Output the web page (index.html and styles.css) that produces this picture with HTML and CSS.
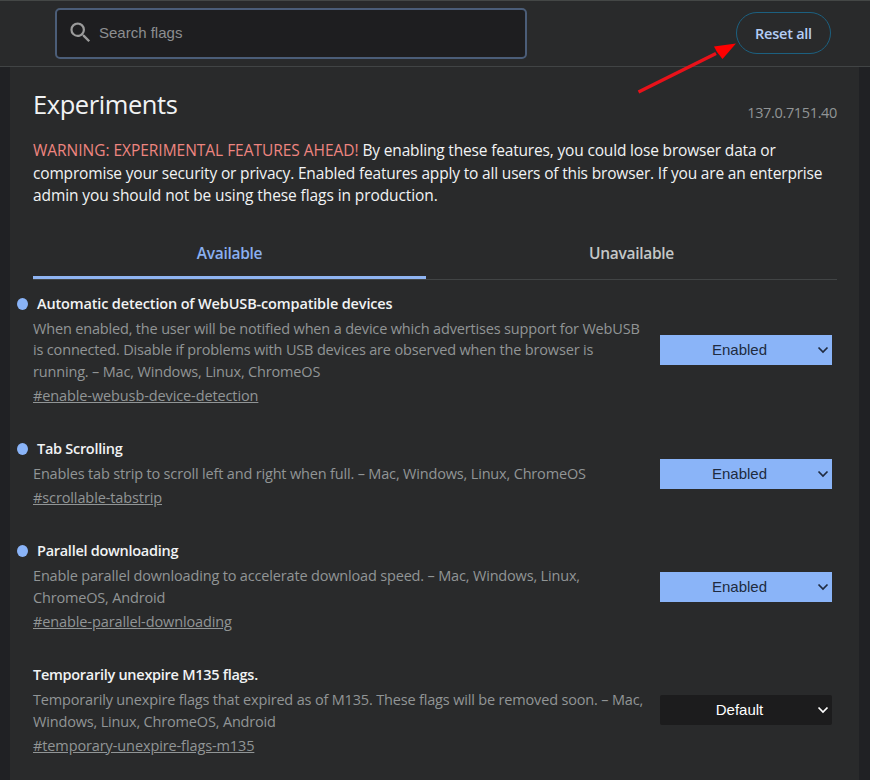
FILE: index.html
```html
<!DOCTYPE html>
<html lang="en">
<head>
<meta charset="utf-8">
<title>Experiments</title>
<link rel="stylesheet" href="styles.css">
</head>
<body>
<header class="topbar">
  <div class="search">
    <svg class="search-icon" viewBox="0 0 24 24"><path d="M15.5 14h-.79l-.28-.27A6.471 6.471 0 0 0 16 9.500 6.500 6.500 0 1 0 9.500 16c1.610 0 3.090-.59 4.230-1.570l.27.28v.79l5 4.990L20.490 19l-4.990-5zm-6 0C7.010 14 5 11.990 5 9.500S7.010 5 9.500 5 14 7.010 14 9.500 11.990 14 9.500 14z"/></svg>
    <span>Search flags</span>
  </div>
  <div class="reset">Reset all</div>
</header>
<svg class="arrow" viewBox="0 0 110 60"><path d="M8.500 52L86 13.500" stroke="#e8121a" stroke-width="3.500"/><path d="M106 3.500L84 6.500L87 12L92.500 19Z" fill="#f00"/></svg>
<main class="page">
  <div class="heading"><h1>Experiments</h1><span class="version">137.0.7151.40</span></div>
  <p class="blurb"><span class="warning">WARNING: EXPERIMENTAL FEATURES AHEAD!</span> By enabling these features, you could lose browser data or<br>compromise your security or privacy. Enabled features apply to all users of this browser. If you are an enterprise<br><span class="closing">admin you should not be using these flags in production.</span></p>
  <nav class="tabs"><div class="tab active">Available</div><div class="tab">Unavailable</div></nav>
  <section class="flag changed">
    <div class="info">
      <h2 class="long">Automatic detection of WebUSB-compatible devices</h2>
      <p>When enabled, the user will be notified when a device which advertises support for WebUSB<br>is connected. Disable if problems with USB devices are observed when the browser is<br>running. – Mac, Windows, Linux, ChromeOS</p>
      <a>#enable-webusb-device-detection</a>
    </div>
    <div class="select">Enabled<svg viewBox="0 0 12 8"><path d="M1.500 1.500L6 6L10.500 1.500"/></svg></div>
  </section>
  <section class="flag changed">
    <div class="info">
      <h2>Tab Scrolling</h2>
      <p>Enables tab strip to scroll left and right when full. – Mac, Windows, Linux, ChromeOS</p>
      <a>#scrollable-tabstrip</a>
    </div>
    <div class="select">Enabled<svg viewBox="0 0 12 8"><path d="M1.500 1.500L6 6L10.500 1.500"/></svg></div>
  </section>
  <section class="flag changed">
    <div class="info">
      <h2>Parallel downloading</h2>
      <p>Enable parallel downloading to accelerate download speed. – Mac, Windows, Linux,<br>ChromeOS, Android</p>
      <a>#enable-parallel-downloading</a>
    </div>
    <div class="select">Enabled<svg viewBox="0 0 12 8"><path d="M1.500 1.500L6 6L10.500 1.500"/></svg></div>
  </section>
  <section class="flag">
    <div class="info">
      <h2>Temporarily unexpire M135 flags.</h2>
      <p>Temporarily unexpire flags that expired as of M135. These flags will be removed soon. – Mac,<br>Windows, Linux, ChromeOS, Android</p>
      <a>#temporary-unexpire-flags-m135</a>
    </div>
    <div class="select">Default<svg viewBox="0 0 12 8"><path d="M1.500 1.500L6 6L10.500 1.500"/></svg></div>
  </section>
</main>
</body>
</html>
```

FILE: styles.css
```css
* { box-sizing: border-box; }
body {
  margin: 0;
  height: 780px;
  overflow: hidden;
  background: #202124;
  color: #f1f3f4;
  font-family: "Open Sans", "Noto Sans", sans-serif;
  white-space: nowrap;
}
.topbar {
  display: flex;
  height: 67px;
  padding: 7px 39px 0 55px;
  background: #292a2b;
  border-top: 1px solid #444746;
  border-bottom: 1px solid #414445;
  justify-content: space-between;
}
.search {
  display: flex;
  align-items: center;
  width: 472px;
  height: 51px;
  padding: 0 0 2px 10px;
  background: #1e1e20;
  border: 2px solid #4b5d78;
  border-radius: 5px;
  color: #8d8e90;
  font: 15px "Liberation Sans", sans-serif;
}
.search-icon { width: 27px; height: 27px; margin-right: 5px; fill: #9b9b9b; }
.reset {
  width: 95px;
  height: 42px;
  margin-top: 4px;
  border: 1px solid #1c6080;
  border-radius: 21px;
  color: #b5cdf5;
  font-size: 14.500px;
  font-weight: 600;
  letter-spacing: -.25px;
  line-height: 41px;
  text-align: center;
}
.arrow { position: absolute; left: 630px; top: 40px; width: 110px; height: 60px; fill: none; }
.page {
  width: 849px;
  height: 713px;
  margin-left: 10px;
  padding: 20px 22px 0 23px;
  background: #292a2b;
}
.heading { display: flex; justify-content: space-between; height: 52px; }
h1 { margin: 0; font-size: 25.500px; font-weight: 400; line-height: 34px; letter-spacing: -.42px; }
.version { padding-top: 15px; color: #919596; font-size: 14.500px; line-height: 22px; letter-spacing: -.35px; }
.blurb { margin: 0; height: 90px; font-size: 15.500px; line-height: 22.700px; letter-spacing: -.17px; }
.warning { color: #ee8580; letter-spacing: -.03px; }
.closing { letter-spacing: -.09px; }
.tabs { display: flex; height: 51px; border-bottom: 1px solid #414445; }
.tab {
  flex: 1;
  height: 50px;
  color: #c4c7c7;
  font-size: 15.500px;
  font-weight: 600;
  letter-spacing: -.3px;
  line-height: 48px;
  text-align: center;
}
.active { flex: 0 0 393px; color: #8ab0f0; border-bottom: 3px solid #8fb4f2; border-radius: 2px 2px 0 0; }
.flag { position: relative; display: flex; justify-content: space-between; align-items: center; padding: 11.500px 5px 0 0; }
.flag + .flag { padding-top: 29.300px; }
h2 { margin: 0; font-size: 14.500px; font-weight: 600; line-height: 24px; letter-spacing: -.28px; }
.long { letter-spacing: -.15px; }
.changed h2 { padding-left: 4px; }
.changed h2::before {
  content: "";
  position: absolute;
  left: -16px;
  margin-top: 6px;
  width: 11px;
  height: 12px;
  border-radius: 50%;
  background: #8ab4f8;
}
.info p { margin: 2px 0 1px; color: #919596; font-size: 14.500px; line-height: 21.800px; letter-spacing: -.17px; }
.info a { display: block; color: #919596; font-size: 14.500px; line-height: 24px; letter-spacing: -.11px; text-decoration: underline; }
.select {
  position: relative;
  width: 172px;
  height: 30px;
  padding-right: 13px;
  background: #1c1c1d;
  border-radius: 2px;
  color: #fff;
  font: 15px/30px "Liberation Sans", sans-serif;
  text-align: center;
}
.select svg { position: absolute; right: 3px; top: 11px; width: 12px; height: 8px; fill: none; stroke: currentColor; stroke-width: 1.700; }
.changed .select { background: #8ab4f8; border-radius: 0; color: #202b40; }
```
